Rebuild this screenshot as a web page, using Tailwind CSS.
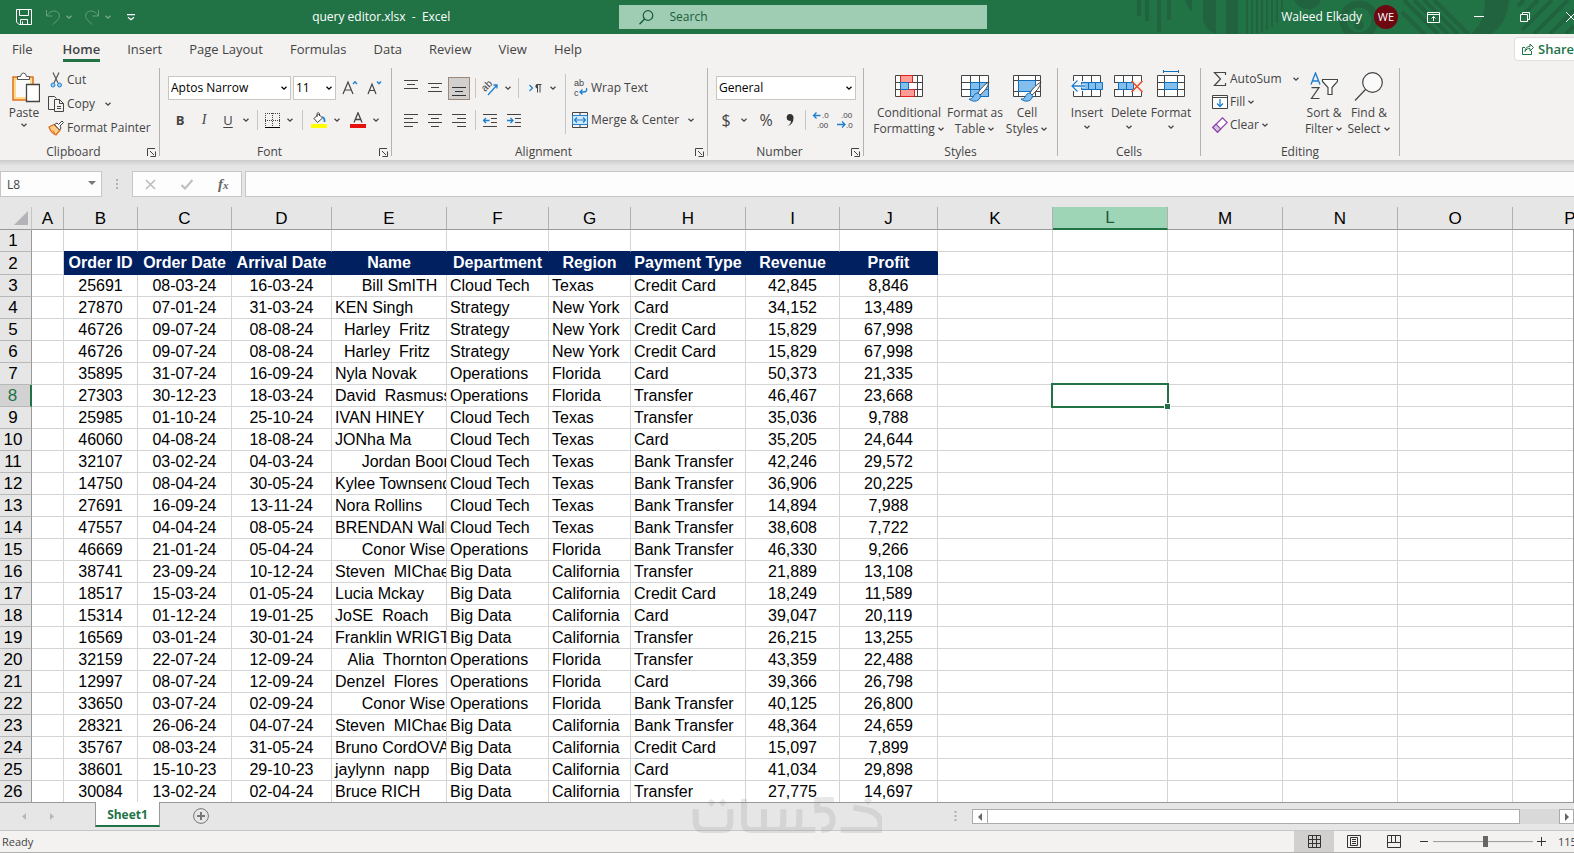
<!DOCTYPE html>
<html lang="en">
<head>
    <meta charset="UTF-8" />
    <meta name="viewport" content="width=device-width, initial-scale=1.0" />
    <title>query editor.xlsx - Excel</title>
    <script src="https://cdn.jsdelivr.net/npm/@tailwindcss/browser@4"></script>
</head>
<body class="h-screen flex flex-col overflow-hidden bg-[#e6e6e6] text-[#444444] text-[12px] leading-4 font-['Open_Sans','Noto_Sans',sans-serif]">

<!-- Shared symbols -->
<svg class="hidden">
    <symbol id="chev" viewBox="0 0 8 8"><path d="M1.5 2.8 4 5.2 6.5 2.8" fill="none" stroke="currentColor" stroke-width="1.3"/></symbol>
    <symbol id="launch" viewBox="0 0 9 9"><path d="M.5 8V.5H8M3 3l4 4M8.500 3.500v5H3.500" fill="none" stroke="currentColor"/></symbol>
    <symbol id="brush" viewBox="0 0 24 24">
        <path d="M22 2c-4 2-9 7-11 11l2 2c4-3 8-8 9-13z" fill="#fff" stroke="#444"/>
        <path d="M11 13c-3 0-4 2-5 4-1 2-2 2-4 2 3 3 9 3 11-1 .6-1.400.400-2.500 0-3z" fill="#83beec" stroke="#0f6fbf"/>
    </symbol>
</svg>

<!-- Title bar -->
<header class="relative h-[34px] shrink-0 flex items-center bg-[#217346] text-white">
    <svg class="absolute right-0 top-0 w-[524px] h-[34px]" viewBox="0 0 524 34" fill="#21633e" stroke="#21633e">
        <g stroke="none">
            <path d="M87 0h4v16h-4zM95 0h4v21h-4zM107 0h4v32h-4zM117 0h4v20h-4zM135 0h7v12q-5-5-7-12zM153 0h13v34q-13-5-13-17zM176 0h12v34h-12z"/>
            <path d="M196 0h2v34h-2zM201 0h2v34h-2zM206 0h2v33h-2zM211 0h2v32h-2zM216 0h2v30h-2zM221 0h2v27h-2zM226 0h2v23h-2zM231 0h2v16h-2z"/>
            <path d="M244 0h27q-3 9-13 9t-14-9zM435 0h24q-2 24-18 34h-20q14-12 14-34z"/>
            <circle cx="309" cy="25" r="5"/>
        </g>
        <circle cx="309" cy="20" r="16" fill="none" stroke-width="7"/>
        <path d="M354 0l34 34M364 0l34 34M374 0l34 34M384 0l34 34M352 12l22 22M468 6l6-6M472 16 488 0M472 30 502 0M484 34 518 0M500 34l24-24M516 34l8-8" stroke-width="4" fill="none"/>
    </svg>
    <div class="relative flex items-center flex-1 pl-4 mr-[15px]">
        <button aria-label="Save" class="mr-[13px]">
            <svg class="size-4" viewBox="0 0 16 16" fill="none" stroke="#fff"><path d="M.5.5h15v15H3l-2.500-2.500zM3.500.5v6h9v-6M4.500 15.500v-5h7v5M6.500 15.500v-3"/></svg>
        </button>
        <button aria-label="Undo" class="opacity-30"><svg class="size-4" viewBox="0 0 16 16" fill="none" stroke="#fff"><path d="M1.500 1v6h6M1.500 7C4 3 8 1 11.500 2.500S15 8 13 10.500L8 15.500"/></svg></button>
        <button aria-label="Undo list" class="opacity-40 mx-1"><svg class="size-2"><use href="#chev"/></svg></button>
        <button aria-label="Redo" class="opacity-30 ml-[7px]"><svg class="size-4" viewBox="0 0 16 16" fill="none" stroke="#fff"><path d="M14.500 1v6h-6M14.500 7C12 3 8 1 4.500 2.500S1 8 3 10.500L8 15.500"/></svg></button>
        <button aria-label="Redo list" class="opacity-40 mx-1"><svg class="size-2"><use href="#chev"/></svg></button>
        <button aria-label="Customize toolbar" class="ml-[11px]"><svg class="w-2 h-[7px]" viewBox="0 0 8 7" fill="none" stroke="#fff"><path d="M0 .5h8M1 3.200l3 2.500 3-2.500" stroke-width="1.300"/></svg></button>
        <span class="flex-1 text-center pl-6 whitespace-pre">query editor.xlsx  -  Excel</span>
    </div>
    <label class="relative flex items-center w-[368px] h-6 bg-[#9fcdb3] px-5 gap-4">
        <svg class="size-[15px] shrink-0" viewBox="0 0 15 15" fill="none" stroke="#185c37"><circle cx="9" cy="5.500" r="4.800" stroke-width="1.200"/><path d="M5.500 9 .5 14.300" stroke-width="1.400"/></svg>
        <input type="text" placeholder="Search" class="w-full bg-transparent outline-none placeholder:text-[#185c37]" />
    </label>
    <div class="relative flex items-center justify-end flex-1 -mr-5 pl-5">
        <span>Waleed Elkady</span>
        <span class="size-6 ml-3 mr-3 rounded-full bg-[#6e0811] flex items-center justify-center text-[11px]">WE</span>
        <button aria-label="Ribbon display options" class="w-[46px] flex justify-center"><svg class="w-[13px] h-[11px]" viewBox="0 0 13 11" fill="none" stroke="#fff"><path d="M.5.5h12v10H.5zM.5 2.500h12M6.500 9V4.500M4.500 6.500l2-2 2 2"/></svg></button>
        <button aria-label="Minimize" class="w-[46px] flex justify-center"><svg class="w-[10px] h-[10px]" viewBox="0 0 10 10" stroke="#fff"><path d="M0 4.500h10"/></svg></button>
        <button aria-label="Restore" class="w-[46px] flex justify-center"><svg class="w-[10px] h-[10px]" viewBox="0 0 10 10" fill="none" stroke="#fff"><path d="M.5 2.500h7v7h-7zM2.500 2V.5h7v7H8"/></svg></button>
        <button aria-label="Close" class="w-[46px] flex justify-center"><svg class="w-[10px] h-[10px]" viewBox="0 0 10 10" stroke="#fff"><path d="M0 0l10 10M10 0 0 10"/></svg></button>
    </div>
</header>

<!-- Tabs -->
<nav class="h-8 shrink-0 flex items-center justify-between bg-[#f3f2f1] text-[13px] pl-3 pb-[2px]">
    <div class="flex gap-[27px]">
        <a href="#" class="mr-[3px]">File</a>
        <a href="#" class="font-semibold relative">Home<span class="absolute inset-x-0 top-[18px] h-[3px] bg-[#217346]"></span></a>
        <a href="#">Insert</a>
        <a href="#">Page Layout</a>
        <a href="#">Formulas</a>
        <a href="#">Data</a>
        <a href="#">Review</a>
        <a href="#">View</a>
        <a href="#">Help</a>
    </div>
    <button class="flex items-center gap-1 h-6 pl-[7px] w-[60px] bg-white border border-r-0 border-[#e1dfdd] rounded-l-sm text-[#217346] font-semibold whitespace-nowrap">
        <svg class="size-3 shrink-0" viewBox="0 0 12 12" fill="none" stroke="#217346"><path d="M3 4.500H.5v7h9V8M3 8.500C3 5 5 3.500 8 3.500V1l3.500 3.500L8 8V5.500C6 5.500 4 6 3 8.500z"/></svg>
        Share
    </button>
</nav>

<!-- Ribbon -->
<section class="h-[94px] shrink-0 flex bg-[#f3f2f1] pt-[2px] whitespace-nowrap">

    <div class="w-40 shrink-0 flex flex-col border-r border-[#b5b3b1] mb-1">
        <div class="h-[76px] shrink-0 flex">
            <button class="w-12 flex flex-col items-center pt-1">
                <svg class="w-7 h-[31px] ml-1" viewBox="0 0 28 31" fill="none">
                    <path d="M1 5h20v23H1z" fill="#ffd98c" stroke="#e0701e" stroke-width="1.500"/><path d="M4 8h14v17H4z" fill="#fafafa"/>
                    <path d="M5.500 7.500V4.500h3Q9 1 11.500 1t3 3.500h3v3z" fill="#fff" stroke="#555"/>
                    <path d="M14.500 12.500h13v17h-13z" fill="#fff" stroke="#444" stroke-width="1.300"/>
                </svg>
                <span class="mt-[2px]">Paste</span>
                <svg class="size-2"><use href="#chev"/></svg>
            </button>
            <div class="flex flex-col items-start">
                <button class="h-6 flex items-center gap-[3px]">
                    <svg class="size-4" viewBox="0 0 16 16" fill="none" stroke="#555"><path d="M5 .5 10 11M11 .5 6 11" stroke-width="1.200"/><circle cx="5" cy="13" r="2" fill="#9cd0f5" stroke="#1e7fd0"/><circle cx="11.500" cy="13" r="2" fill="#9cd0f5" stroke="#1e7fd0"/></svg>Cut
                </button>
                <button class="h-6 flex items-center gap-[3px]">
                    <svg class="size-4" viewBox="0 0 16 16" fill="none" stroke="#444"><path d="M6 13.500H.5V.5h6l2 2M6.500 3.500h5l4 4v8h-9zM11.500 3.500v4h4M9 10.500h4M9 12.500h4"/></svg>Copy
                    <svg class="size-2 ml-[6px]"><use href="#chev"/></svg>
                </button>
                <button class="h-6 flex items-center gap-[3px]">
                    <svg class="size-4" viewBox="0 0 16 16"><path d="M1 7l5-2.500L12 10 8 15q-5-2-7-8z" fill="#ffcf8a" stroke="#e0701e" stroke-width="1.300"/><path d="M7.500 15 5 10.500" stroke="#e0701e"/><path d="M6.500 4.500 9 3l1.500 1.500L14 1l1.500 1.500L12 6l1 2-1.500 2z" fill="#fff" stroke="#444"/></svg>Format Painter
                </button>
            </div>
        </div>
        <div class="h-4 flex items-center"><span class="flex-1 text-center">Clipboard</span><button aria-label="Clipboard settings" class="w-3"><svg class="size-[9px]"><use href="#launch"/></svg></button></div>
    </div>

    <div class="w-[232px] shrink-0 flex flex-col border-r border-[#b5b3b1] mb-1">
        <div class="h-[76px] shrink-0 flex flex-col gap-2 pt-2 pl-2">
            <div class="flex items-center">
                <div class="relative text-black"><select aria-label="Font" class="appearance-none w-[123px] h-6 border border-[#c8c6c4] bg-white px-[2px]"><option>Aptos Narrow</option></select><svg class="absolute right-[3px] top-2 size-2"><use href="#chev"/></svg></div>
                <div class="relative text-black ml-[2px]"><select aria-label="Font size" class="appearance-none w-[43px] h-6 border border-[#c8c6c4] bg-white px-[2px]"><option>11</option></select><svg class="absolute right-[3px] top-2 size-2"><use href="#chev"/></svg></div>
                <button aria-label="Increase font size" class="w-6 flex justify-center ml-[2px]"><svg class="w-4 h-4" viewBox="0 0 16 16" fill="none"><path d="M1 14 6 2l5 12M2.500 10h7" stroke="#444" stroke-width="1.200"/><path d="M11 4l2-2.200L15 4" stroke="#1e7fd0" stroke-width="1.300"/></svg></button>
                <button aria-label="Decrease font size" class="w-6 flex justify-center"><svg class="w-4 h-4" viewBox="0 0 16 16" fill="none"><path d="M2 14 6 4l4 10M3.200 10.500h5.600" stroke="#444" stroke-width="1.200"/><path d="M11 1.500l2 2.200 2-2.200" stroke="#1e7fd0" stroke-width="1.300"/></svg></button>
            </div>
            <div class="flex items-center h-6">
                <button class="w-6 font-bold text-[13px]">B</button>
                <button class="w-6 italic text-[14px] font-['Liberation_Serif',serif]">I</button>
                <button class="w-6 underline underline-offset-2 text-[13px]">U</button>
                <button aria-label="Underline styles" class="w-3 flex justify-center"><svg class="size-2"><use href="#chev"/></svg></button>
                <span class="w-px h-5 bg-[#c8c6c4] ml-[5px] mr-[2px]"></span>
                <button aria-label="Borders" class="w-6 flex justify-center"><svg class="size-[15px]" viewBox="0 0 15 15" fill="none" stroke="#444"><path d="M.5 0v13M14.500 0v13M0 .5h15M7.500 0v13M0 7.500h15" stroke-dasharray="1 1"/><path d="M0 14.500h15" stroke="#000"/></svg></button>
                <button aria-label="Border styles" class="w-3 flex justify-center"><svg class="size-2"><use href="#chev"/></svg></button>
                <span class="w-px h-5 bg-[#c8c6c4] ml-1.5 mr-1"></span>
                <button aria-label="Fill color" class="w-6 flex justify-center"><svg class="size-4" viewBox="0 0 16 16" fill="none"><path d="M3 6.500 7.500 2l4 4-5 4.500z" fill="#fff" stroke="#444"/><path d="M6 5V1.500Q7.500-.5 8.500 1.500V4" stroke="#444"/><path d="M11 5q3 1 2.500 5" stroke="#1e7fd0" stroke-width="1.800"/><path d="M0 12h16v4H0z" fill="#ff0"/></svg></button>
                <button aria-label="Fill colors" class="w-3 flex justify-center"><svg class="size-2"><use href="#chev"/></svg></button>
                <button aria-label="Font color" class="w-6 flex justify-center ml-[3px]"><svg class="size-4" viewBox="0 0 16 16" fill="none"><path d="M4 10.500 8 .8l4 9.700M5.300 7.500h5.400" stroke="#444" stroke-width="1.300"/><path d="M0 12h16v4H0z" fill="#e8120c"/></svg></button>
                <button aria-label="Font colors" class="w-3 flex justify-center"><svg class="size-2"><use href="#chev"/></svg></button>
            </div>
        </div>
        <div class="h-4 flex items-center"><span class="flex-1 text-center">Font</span><button aria-label="Font settings" class="w-3"><svg class="size-[9px]"><use href="#launch"/></svg></button></div>
    </div>

    <div class="w-[316px] shrink-0 flex flex-col border-r border-[#b5b3b1] mb-1">
        <div class="h-[76px] shrink-0 flex">
            <div class="flex flex-col gap-2 pt-2 pl-[7px]">
                <div class="flex items-center h-6">
                    <button aria-label="Top align" class="w-6 flex justify-center"><svg class="w-[14px] h-4" viewBox="0 0 14 16" stroke="#444"><path d="M0 .5h14M3 4.500h8M0 8.500h14"/></svg></button>
                    <button aria-label="Middle align" class="w-6 flex justify-center"><svg class="w-[14px] h-4" viewBox="0 0 14 16" stroke="#444"><path d="M0 3.500h14M3 7.500h8M0 11.500h14"/></svg></button>
                    <button aria-label="Bottom align" class="w-[22px] mx-px h-[23px] flex justify-center items-center bg-[#d2d0ce] border border-[#9c8878]"><svg class="w-[14px] h-4" viewBox="0 0 14 16" stroke="#333"><path d="M0 7.500h14M3 11.500h8M0 15.500h14"/></svg></button>
                    <span class="w-px h-5 bg-[#c8c6c4] ml-1 mr-[2px]"></span>
                    <button aria-label="Orientation" class="w-6 flex justify-center"><svg class="size-4 overflow-visible" viewBox="0 0 16 16" fill="none"><text transform="translate(3 12) rotate(-45)" font-size="10" fill="#444" font-family="Liberation Sans">ab</text><path d="M6 15 15 5M11.500 5H15v3.500" stroke="#1e7fd0" stroke-width="1.300"/></svg></button>
                    <button aria-label="Orientation list" class="w-3 flex justify-center"><svg class="size-2"><use href="#chev"/></svg></button>
                    <span class="w-px h-5 bg-[#c8c6c4] ml-1 mr-1"></span>
                    <button aria-label="Text direction" class="w-6 flex justify-center"><svg class="w-[13px] h-3" viewBox="0 0 13 12" fill="none"><path d="M.5 3 3.500 6l-3 3" stroke="#1e7fd0" stroke-width="1.300"/><path d="M8.500 2.500v8M11 2.500v8M12.500 2.500H8" stroke="#444"/><path d="M8.500 2a2 2.200 0 000 4.500z" fill="#444"/></svg></button>
                    <button aria-label="Text direction list" class="w-3 flex justify-center"><svg class="size-2"><use href="#chev"/></svg></button>
                </div>
                <div class="flex items-center h-6">
                    <button aria-label="Align left" class="w-6 flex justify-center"><svg class="w-[14px] h-[13px]" viewBox="0 0 14 13" stroke="#444"><path d="M0 .5h14M0 4.500h9M0 8.500h14M0 12.500h9"/></svg></button>
                    <button aria-label="Center" class="w-6 flex justify-center"><svg class="w-[14px] h-[13px]" viewBox="0 0 14 13" stroke="#444"><path d="M0 .5h14M3 4.500h8M0 8.500h14M3 12.500h8"/></svg></button>
                    <button aria-label="Align right" class="w-6 flex justify-center"><svg class="w-[14px] h-[13px]" viewBox="0 0 14 13" stroke="#444"><path d="M0 .5h14M5 4.500h9M0 8.500h14M5 12.500h9"/></svg></button>
                    <span class="w-px h-5 bg-[#c8c6c4] ml-1 mr-[2px]"></span>
                    <button aria-label="Decrease indent" class="w-6 flex justify-center"><svg class="w-[14px] h-[13px]" viewBox="0 0 14 13" fill="none" stroke="#444"><path d="M0 .5h14M8 4.500h6M8 8.500h6M0 12.500h14"/><path d="M.5 6.500h6M3 4 .5 6.500 3 9" stroke="#1e7fd0" stroke-width="1.300"/></svg></button>
                    <button aria-label="Increase indent" class="w-6 flex justify-center"><svg class="w-[14px] h-[13px]" viewBox="0 0 14 13" fill="none" stroke="#444"><path d="M0 .5h14M8 4.500h6M8 8.500h6M0 12.500h14"/><path d="M0 6.500h6M3.500 4 6 6.500 3.500 9" stroke="#1e7fd0" stroke-width="1.300"/></svg></button>
                </div>
            </div>
            <span class="w-px h-[60px] bg-[#c8c6c4] mt-[6px] mx-1.5"></span>
            <div class="flex flex-col gap-2 pt-2">
                <button class="h-6 flex items-center gap-[3px]"><svg class="w-4 h-[18px] overflow-visible" viewBox="0 0 16 18" fill="none"><text x="2" y="7" font-size="9" fill="#444" font-family="Liberation Sans">ab</text><text x="2" y="17" font-size="9" fill="#444" font-family="Liberation Sans">c</text><path d="M14.500 9q1 4-3 4H8M10.500 10.500 8 13l2.500 2.500" stroke="#1e7fd0" stroke-width="1.300"/></svg>Wrap Text</button>
                <button class="h-6 flex items-center gap-[3px]"><svg class="size-4" viewBox="0 0 16 16" fill="none"><path d="M.5 4V.5h15V4M.5 12v3.500h15V12M8 .5V3M8 13v2.500" stroke="#444"/><path d="M.5 3.500h15v9H.5z" fill="#d6ebfa" stroke="#1e7fd0"/><path d="M2.500 8h11M5 5.500 2.500 8 5 10.500M11 5.500 13.500 8 11 10.500" stroke="#1e7fd0" stroke-width="1.200"/></svg>Merge &amp; Center<svg class="size-2 ml-[5px]"><use href="#chev"/></svg></button>
            </div>
        </div>
        <div class="h-4 flex items-center"><span class="flex-1 text-center">Alignment</span><button aria-label="Alignment settings" class="w-3"><svg class="size-[9px]"><use href="#launch"/></svg></button></div>
    </div>

    <div class="w-[156px] shrink-0 flex flex-col border-r border-[#b5b3b1] mb-1">
        <div class="h-[76px] shrink-0 flex flex-col gap-2 pt-2 pl-2">
            <div class="relative text-black"><select aria-label="Number format" class="appearance-none w-[140px] h-6 border border-[#c8c6c4] bg-white px-[2px]"><option>General</option></select><svg class="absolute left-[129px] top-2 size-2"><use href="#chev"/></svg></div>
            <div class="flex items-center h-6">
                <button class="w-5 text-[16px]">$</button>
                <button aria-label="Accounting formats" class="w-4 flex justify-center"><svg class="size-2"><use href="#chev"/></svg></button>
                <button class="w-7 text-[16px]">%</button>
                <button aria-label="Comma style" class="w-5 flex justify-center"><svg class="w-2 h-3" viewBox="0 0 8 12" fill="#333"><path d="M4 0a3.500 3.500 0 00-1 6.800Q5 7.200 5 6.500 5 10 1.500 12 7.500 10.500 7.500 4A3.500 3.500 0 004 0z"/></svg></button>
                <span class="w-px h-5 bg-[#c8c6c4] ml-[5px] mr-[3px]"></span>
                <button aria-label="Increase decimal" class="w-6 flex justify-center"><svg class="w-4 h-[18px] overflow-visible" viewBox="0 0 16 18" fill="none"><text x="9" y="7" font-size="8" fill="#444" font-family="Liberation Sans">.0</text><text x="4" y="17" font-size="8" fill="#444" font-family="Liberation Sans">.00</text><path d="M.5 4.500h7M3.500 1.500l-3 3 3 3" stroke="#1e7fd0" stroke-width="1.300"/></svg></button>
                <button aria-label="Decrease decimal" class="w-6 flex justify-center"><svg class="w-4 h-[18px] overflow-visible" viewBox="0 0 16 18" fill="none"><text x="4" y="7" font-size="8" fill="#444" font-family="Liberation Sans">.00</text><text x="9" y="17" font-size="8" fill="#444" font-family="Liberation Sans">.0</text><path d="M0 13.500h8M5 10.500l3 3-3 3" stroke="#1e7fd0" stroke-width="1.300"/></svg></button>
            </div>
        </div>
        <div class="h-4 flex items-center"><span class="flex-1 text-center">Number</span><button aria-label="Number settings" class="w-3"><svg class="size-[9px]"><use href="#launch"/></svg></button></div>
    </div>

    <div class="w-[194px] shrink-0 flex flex-col border-r border-[#b5b3b1] mb-1">
        <div class="h-[76px] shrink-0 flex pl-2">
            <button class="w-[74px] flex flex-col items-center pt-[7px]">
                <svg class="w-7 h-[22px] mb-2" viewBox="0 0 28 22" fill="none"><path d="M.5.5h27v21H.5z" fill="#fff" stroke="#444"/><path d="M.5 7.500h27M.5 14.500h27M5.500.5v21M22.500.5v21" stroke="#444"/><path d="M5.500.5h12v7h-12zM5.500 14.500h14v7h-14z" fill="#ff9d96" stroke="#e0201b"/><path d="M5.500 7.500h8v7h-8z" fill="#83beec" stroke="#0f6fbf"/></svg>
                <span>Conditional</span><span class="flex items-center gap-[2px]">Formatting <svg class="size-2"><use href="#chev"/></svg></span>
            </button>
            <button class="w-[58px] flex flex-col items-center pt-[7px]">
                <svg class="w-[30px] h-7 mb-[2px] ml-[2px]" viewBox="0 0 30 28" fill="none"><path d="M.5.5h27v21H.5z" fill="#fff" stroke="#444"/><path d="M9.500 7.500h18v14h-18z" fill="#83beec"/><path d="M.5 7.500h27M.5 14.500h9M9.500.5v21M18.500.5v7" stroke="#444"/><path d="M9.500 7.500h18v14h-18zM9.500 14.500h18M18.500 7.500v14" stroke="#0f6fbf"/><use href="#brush" x="6" y="5" width="24" height="24"/></svg>
                <span>Format as</span><span class="flex items-center gap-[2px]">Table <svg class="size-2"><use href="#chev"/></svg></span>
            </button>
            <button class="w-[46px] flex flex-col items-center pt-[7px]">
                <svg class="w-[30px] h-7 mb-[2px] ml-[2px]" viewBox="0 0 30 28" fill="none"><path d="M.5.5h27v21H.5z" fill="#fff" stroke="#444"/><path d="M.5 5.500h27M.5 16.500h27M5.500.5v21M22.500.5v21" stroke="#444"/><path d="M5.500 5.500h17v11h-17z" fill="#83beec" stroke="#0f6fbf"/><use href="#brush" x="6" y="5" width="24" height="24"/></svg>
                <span>Cell</span><span class="flex items-center gap-[2px]">Styles <svg class="size-2"><use href="#chev"/></svg></span>
            </button>
        </div>
        <div class="h-4 text-center">Styles</div>
    </div>

    <div class="w-[143px] shrink-0 flex flex-col border-r border-[#b5b3b1] mb-1">
        <div class="h-[76px] shrink-0 flex pl-2">
            <button class="w-[42px] flex flex-col items-center pt-[2px]">
                <svg class="w-8 h-[27px] mb-2" viewBox="0 0 32 27" fill="none"><path d="M2.500 5.500h27v21h-27z" fill="#fff" stroke="#444"/><path d="M11.500 5.500v21M20.500 5.500v21" stroke="#444"/><path d="M0 11h14v10H0z" fill="#f3f2f1"/><path d="M10.500 12.500h21v7h-21zM17.500 12.500v7M24.500 12.500v7" fill="#83beec" stroke="#0f6fbf"/><path d="M1 16h13M6.500 10.500 1 16l5.500 5.500" stroke="#fff" stroke-width="3"/><path d="M1 16h13M6.500 10.500 1 16l5.500 5.500" stroke="#1e7fd0" stroke-width="1.300"/></svg>
                <span>Insert</span><svg class="size-2 mt-[2px]"><use href="#chev"/></svg>
            </button>
            <button class="w-[42px] flex flex-col items-center pt-[2px]">
                <svg class="w-[30px] h-[27px] mb-2" viewBox="0 0 30 27" fill="none"><path d="M.5 5.500h27v21H.5z" fill="#fff" stroke="#444"/><path d="M.5 12.500h27M.5 19.500h27M9.500 5.500v21M18.500 5.500v21" stroke="#444"/><path d="M0 13h4v6H0zM20 11h9v11h-9z" fill="#f3f2f1"/><path d="M4.500 12.500h15v7h-15zM12.500 12.500v7" fill="#83beec" stroke="#0f6fbf"/><path d="M17.500 11l11 11M28.500 11l-11 11" stroke="#e8502a" stroke-width="1.600"/></svg>
                <span>Delete</span><svg class="size-2 mt-[2px]"><use href="#chev"/></svg>
            </button>
            <button class="w-[42px] flex flex-col items-center pt-[2px]">
                <svg class="w-7 h-[27px] mb-2" viewBox="0 0 28 27" fill="none"><path d="M6.500 0v3M21.500 0v3M6.500 1.500h15" stroke="#0f6fbf"/><path d="M.5 5.500h27v21H.5z" fill="#fff" stroke="#444"/><path d="M.5 12.500h27M.5 19.500h27M7.500 5.500v21M20.500 5.500v21" stroke="#444"/><path d="M7.500 12.500h13v7h-13z" fill="#83beec" stroke="#0f6fbf"/></svg>
                <span>Format</span><svg class="size-2 mt-[2px]"><use href="#chev"/></svg>
            </button>
        </div>
        <div class="h-4 text-center">Cells</div>
    </div>

    <div class="w-[199px] shrink-0 flex flex-col border-r border-[#b5b3b1] mb-1">
        <div class="h-[76px] shrink-0 flex pl-[11px]">
            <div class="w-[88px] flex flex-col items-start">
                <button class="h-[22px] flex items-center gap-[2px]"><svg class="size-4" viewBox="0 0 16 16" fill="none" stroke="#444"><path d="M13.500 4V1.500h-11L8.500 8l-6 6.500h11V12" stroke-width="1.200"/></svg>AutoSum<svg class="size-2 ml-2"><use href="#chev"/></svg></button>
                <button class="h-6 flex items-center gap-[2px]"><svg class="size-4" viewBox="0 0 16 16" fill="none" stroke="#444"><path d="M.5 1.500h15v13H.5zM.5 3.500h15" fill="#fff"/><path d="M8 5v7.500M5 9.500l3 3 3-3" stroke="#1e7fd0" stroke-width="1.300"/></svg>Fill<svg class="size-2"><use href="#chev"/></svg></button>
                <button class="h-[22px] flex items-center gap-[2px]"><svg class="size-4" viewBox="0 0 16 16"><path d="M.8 10.500 10.500.8l4.700 4.700-9.700 9.700z" fill="#fff" stroke="#8e44ad" stroke-width="1.200"/><path d="M.8 10.500 4 7.200l4.700 4.700-3.200 3.300z" fill="#d2c4da" stroke="#8e44ad" stroke-width="1.200"/></svg>Clear<svg class="size-2"><use href="#chev"/></svg></button>
            </div>
            <button class="w-12 flex flex-col items-center pt-1">
                <svg class="w-7 h-7 mb-[5px]" viewBox="0 0 28 28" fill="none"><path d="M1 12.500 5.500 1 10 12.500M2.500 9h6" stroke="#1e7fd0" stroke-width="1.400"/><path d="M1.500 15.600H9L1.500 26.500H9.500" stroke="#444" stroke-width="1.200"/><path d="M12.500 7.500h15v2L22 15.500v7h-4v-7l-5.500-6z" fill="#fff" stroke="#444" stroke-width="1.200"/></svg>
                <span>Sort &amp;</span><span class="flex items-center gap-[2px]">Filter <svg class="size-2"><use href="#chev"/></svg></span>
            </button>
            <button class="w-[42px] flex flex-col items-center pt-1">
                <svg class="w-[30px] h-[30px] mb-[3px]" viewBox="0 0 30 30" fill="none" stroke="#444" stroke-width="1.200"><circle cx="18.500" cy="10.500" r="9.800" fill="#fafafa"/><path d="M11.500 17.500 1 28.500"/></svg>
                <span>Find &amp;</span><span class="flex items-center gap-[2px]">Select <svg class="size-2"><use href="#chev"/></svg></span>
            </button>
        </div>
        <div class="h-4 text-center">Editing</div>
    </div>
</section>
<div class="h-[6px] shrink-0 bg-linear-to-b from-[#cccccc] to-[#e6e6e6]"></div>

<!-- Formula bar -->
<div class="h-[41px] shrink-0 flex items-start pt-[5px]">
    <div class="relative">
        <input type="text" aria-label="Name box" value="L8" class="w-[102px] h-[26px] bg-[#fdfdfd] border border-[#c6c6c6] pl-[6px] block" />
        <svg class="absolute right-[6px] top-[10px] w-2 h-1" viewBox="0 0 8 4" fill="#777"><path d="M0 0h8L4 4z"/></svg>
    </div>
    <svg class="w-[4px] h-[26px] mx-[13px]" viewBox="0 0 4 26" fill="#b0b0b0"><path d="M1 8h2v2h-2zM1 12h2v2h-2zM1 16h2v2h-2z"/></svg>
    <div class="w-[110px] h-[26px] bg-[#fdfdfd] border border-[#c6c6c6] flex items-center justify-around">
        <button aria-label="Cancel"><svg class="size-[11px]" viewBox="0 0 11 11" stroke="#bdbdbd" stroke-width="1.600"><path d="M1 1l9 9M10 1l-9 9"/></svg></button>
        <button aria-label="Enter"><svg class="w-3 h-[11px]" viewBox="0 0 12 11" fill="none" stroke="#bdbdbd" stroke-width="2"><path d="M.5 6 4 9.500 11.500 1"/></svg></button>
        <button aria-label="Insert function" class="font-['Liberation_Serif',serif] italic font-bold text-[15px] text-[#666666]">f<span class="text-[11px]">x</span></button>
    </div>
    <input type="text" aria-label="Formula" class="flex-1 ml-[3px] h-[26px] bg-[#fdfdfd] border border-r-0 border-[#c6c6c6]" />
</div>

<!-- Sheet -->
<main class="relative flex-1 min-h-0 overflow-hidden">
    <table class="table-fixed border-separate border-spacing-0 w-[1628px] bg-white text-black text-[16px] leading-5 font-['Liberation_Sans',Arial,sans-serif]">
        <colgroup>
            <col class="w-[32px]" /><col class="w-[32px]" /><col class="w-[74px]" /><col class="w-[94px]" /><col class="w-[100px]" />
            <col class="w-[115px]" /><col class="w-[102px]" /><col class="w-[82px]" /><col class="w-[115px]" /><col class="w-[94px]" /><col class="w-[98px]" />
            <col class="w-[115px]" /><col class="w-[115px]" /><col class="w-[115px]" /><col class="w-[115px]" /><col class="w-[115px]" /><col class="w-[115px]" />
        </colgroup>
        <thead>
            <tr id="columns" class="h-[23px]">
                <th class="p-0 bg-[#e6e6e6] border-b border-r border-b-[#999999] border-r-[#c4c4c4]"><svg class="size-[14px] ml-[14px]" viewBox="0 0 14 14" fill="#b4b4b8"><path d="M14 0v14H0z"/></svg></th>
            </tr>
        </thead>
        <tbody id="rows"></tbody>
    </table>
    <div class="absolute right-0 top-[23px] bottom-0 w-px bg-[#999999]"></div>
</main>

<!-- Sheet tabs and scroll bar -->
<footer class="relative shrink-0">
    <div class="h-7 flex items-start border-t border-[#999999]">
        <div class="w-[95px] flex items-center h-[27px] pl-[22px] gap-6">
            <button aria-label="Previous sheet"><svg class="w-1 h-[7px]" viewBox="0 0 4 7" fill="#b8b8b8"><path d="M4 0v7L0 3.500z"/></svg></button>
            <button aria-label="Next sheet"><svg class="w-1 h-[7px]" viewBox="0 0 4 7" fill="#b8b8b8"><path d="M0 0v7l4-3.500z"/></svg></button>
        </div>
        <button class="w-[65px] h-[25px] pt-[3px] -mt-px bg-white border-x border-[#999999] border-b-2 border-b-[#217346] text-[#217346] font-bold">Sheet1</button>
        <button aria-label="New sheet" class="ml-[33px] mt-[5px]"><svg class="size-4" viewBox="0 0 16 16" fill="none" stroke="#777"><circle cx="8" cy="8" r="7.400"/><path d="M8 4v8M4 8h8" stroke-width="2"/></svg></button>
        <div class="ml-auto w-[620px] flex items-center h-[15px] mt-[6px]">
            <svg class="w-[3px] h-[11px] mr-[15px]" viewBox="0 0 3 11" fill="#b0b0b0"><path d="M.5 0h2v2h-2zM.5 4h2v2h-2zM.5 8h2v2h-2z"/></svg>
            <button aria-label="Scroll left" class="w-4 h-[15px] bg-white border border-[#ababab] flex items-center justify-center"><svg class="w-1 h-2" viewBox="0 0 4 8" fill="#666"><path d="M4 0v8L0 4z"/></svg></button>
            <div class="flex-1 h-[15px] bg-[#d9d9d9] pr-[39px]"><div class="h-[15px] bg-white border border-l-0 border-[#ababab]"></div></div>
            <button aria-label="Scroll right" class="w-[15px] h-[15px] bg-white border border-[#ababab] flex items-center justify-center"><svg class="w-1 h-2" viewBox="0 0 4 8" fill="#666"><path d="M0 0v8l4-4z"/></svg></button>
        </div>
    </div>
    <div class="h-[23px] flex items-center bg-[#f3f2f1] border-y border-t-[#c6c6c6] border-b-[#b0b0b0] text-[11px] whitespace-nowrap overflow-hidden">
        <span class="pl-[2px] flex-1">Ready</span>
        <button aria-label="Normal" class="w-10 h-full bg-[#d2d0ce] flex items-center justify-center"><svg class="size-[13px]" viewBox="0 0 13 13" fill="none" stroke="#333"><path d="M.5.5h12v12H.5zM.5 4.500h12M.5 8.500h12M4.500.5v12M8.500.5v12"/></svg></button>
        <button aria-label="Page layout" class="w-10 flex justify-center"><svg class="w-[14px] h-[13px]" viewBox="0 0 14 13" fill="none" stroke="#333"><path d="M.5.5h13v12H.5zM3.500 2.500h7v8h-7zM5 4.500h4M5 6.500h4M5 8.500h4"/></svg></button>
        <button aria-label="Page break preview" class="w-10 flex justify-center"><svg class="w-[14px] h-[13px]" viewBox="0 0 14 13" fill="none" stroke="#333"><path d="M.5.5h13v12H.5zM4.500.5v7M8.500.5v7M.5 7.500h8M8.500 7.500h5"/></svg></button>
        <button aria-label="Zoom out" class="ml-[6px] mr-[5px]"><svg class="w-2 h-2" viewBox="0 0 8 8" stroke="#333"><path d="M0 3.500h8"/></svg></button>
        <input type="range" aria-label="Zoom" min="10" max="190" value="105" class="appearance-none w-[100px] h-[11px] bg-linear-to-b from-transparent from-45% via-[#a0a0a0] via-50% to-transparent to-60% [&::-webkit-slider-thumb]:appearance-none [&::-webkit-slider-thumb]:w-[5px] [&::-webkit-slider-thumb]:h-[11px] [&::-webkit-slider-thumb]:bg-[#666666]" />
        <button aria-label="Zoom in" class="ml-1 mr-3"><svg class="w-[9px] h-[9px]" viewBox="0 0 9 9" stroke="#333"><path d="M0 4.500h9M4.500 0v9"/></svg></button>
        <span class="w-4 overflow-hidden">115%</span>
    </div>
    <svg class="absolute left-[690px] -top-[6px] w-[192px] h-10" viewBox="0 0 576 120" fill="none" stroke="#8a8a8a" stroke-opacity=".2" stroke-width="18">
        <path d="M17 40v32q0 30 24 30h60q20 0 20-24V40M162 8v72q0 22 22 22h192M222 40v62M280 40v40q0 22-18 22M328 40v40q0 22-18 22M432 12h-50v30q46-8 46 30 0 30-34 30M452 102h120V84q0-28-34-40l-48-10"/>
        <path d="M64 8l12 12-12 12-12-12zM98 8l12 12-12 12-12-12zM534 2l12 12-12 12-12-12z" stroke="none" fill="#8a8a8a" fill-opacity=".2"/>
    </svg>
</footer>

<script>
    const columns = ["A", "B", "C", "D", "E", "F", "G", "H", "I", "J", "K", "L", "M", "N", "O", "P"];
    const titles = ["Order ID", "Order Date", "Arrival Date", "Name", "Department", "Region", "Payment Type", "Revenue", "Profit"];

    const orders = [
        ["25691", "08-03-24", "16-03-24", "      Bill SmITH", "Cloud Tech", "Texas", "Credit Card", "42,845", "8,846"],
        ["27870", "07-01-24", "31-03-24", "KEN Singh", "Strategy", "New York", "Card", "34,152", "13,489"],
        ["46726", "09-07-24", "08-08-24", "  Harley  Fritz", "Strategy", "New York", "Credit Card", "15,829", "67,998"],
        ["46726", "09-07-24", "08-08-24", "  Harley  Fritz", "Strategy", "New York", "Credit Card", "15,829", "67,998"],
        ["35895", "31-07-24", "16-09-24", "Nyla Novak", "Operations", "Florida", "Card", "50,373", "21,335"],
        ["27303", "30-12-23", "18-03-24", "David  Rasmussen", "Operations", "Florida", "Transfer", "46,467", "23,668"],
        ["25985", "01-10-24", "25-10-24", "IVAN HINEY", "Cloud Tech", "Texas", "Transfer", "35,036", "9,788"],
        ["46060", "04-08-24", "18-08-24", "JONha Ma", "Cloud Tech", "Texas", "Card", "35,205", "24,644"],
        ["32107", "03-02-24", "04-03-24", "      Jordan Boone", "Cloud Tech", "Texas", "Bank Transfer", "42,246", "29,572"],
        ["14750", "08-04-24", "30-05-24", "Kylee Townsend", "Cloud Tech", "Texas", "Bank Transfer", "36,906", "20,225"],
        ["27691", "16-09-24", "13-11-24", "Nora Rollins", "Cloud Tech", "Texas", "Bank Transfer", "14,894", "7,988"],
        ["47557", "04-04-24", "08-05-24", "BRENDAN Wallace", "Cloud Tech", "Texas", "Bank Transfer", "38,608", "7,722"],
        ["46669", "21-01-24", "05-04-24", "      Conor Wise", "Operations", "Florida", "Bank Transfer", "46,330", "9,266"],
        ["38741", "23-09-24", "10-12-24", "Steven  MIChael", "Big Data", "California", "Transfer", "21,889", "13,108"],
        ["18517", "15-03-24", "01-05-24", "Lucia Mckay", "Big Data", "California", "Credit Card", "18,249", "11,589"],
        ["15314", "01-12-24", "19-01-25", "JoSE  Roach", "Big Data", "California", "Card", "39,047", "20,119"],
        ["16569", "03-01-24", "30-01-24", "Franklin WRIGTH", "Big Data", "California", "Transfer", "26,215", "13,255"],
        ["32159", "22-07-24", "12-09-24", "   Alia  Thornton", "Operations", "Florida", "Transfer", "43,359", "22,488"],
        ["12997", "08-07-24", "12-09-24", "Denzel  Flores", "Operations", "Florida", "Card", "39,366", "26,798"],
        ["33650", "03-07-24", "02-09-24", "      Conor Wise", "Operations", "Florida", "Bank Transfer", "40,125", "26,800"],
        ["28321", "26-06-24", "04-07-24", "Steven  MIChael", "Big Data", "California", "Bank Transfer", "48,364", "24,659"],
        ["35767", "08-03-24", "31-05-24", "Bruno CordOVA", "Big Data", "California", "Credit Card", "15,097", "7,899"],
        ["38601", "15-10-23", "29-10-23", "jaylynn  napp", "Big Data", "California", "Card", "41,034", "29,898"],
        ["30084", "13-02-24", "02-04-24", "Bruce RICH", "Big Data", "California", "Transfer", "27,775", "14,697"]
    ];

    // Column letters
    document.getElementById("columns").insertAdjacentHTML("beforeend", columns.map(letter => {
        if (letter === "L") {
            return `<th class="p-0 font-normal text-[17px] bg-[#9fd5b7] text-[#1c5c38] border-b-2 border-r border-b-[#217346] border-r-[#b0b0b0]">L</th>`;
        }
        return `<th class="p-0 pt-px font-normal text-[17px] bg-[#e6e6e6] border-b border-r border-b-[#999999] border-r-[#b0b0b0]">${letter}</th>`;
    }).join(""));

    function rowHeader(n) {
        if (n === 8) {
            return `<th class="p-0 pt-px pr-[5px] font-normal text-[17px] bg-[#d2d2d2] text-[#217346] border-b border-b-[#b8b8b8] border-r-2 border-r-[#217346]">8</th>`;
        }
        return `<th class="p-0 pt-px pr-[5px] font-normal text-[17px] bg-[#e6e6e6] border-b border-r border-b-[#b8b8b8] border-r-[#999999]">${n}</th>`;
    }

    function cell(n, i) {
        const inTable = i >= 1 && i <= 9;
        if (n === 1 && inTable) {
            return `<td class="p-0 border-b border-r border-b-[#002060] border-r-[#d4d4d4]"></td>`;
        }
        if (n === 2 && inTable) {
            return `<td class="p-0 border-b border-r border-[#002060] bg-[#002060] text-white font-bold text-center whitespace-nowrap">${titles[i - 1]}</td>`;
        }
        if (n === 8 && columns[i] === "L") {
            return `<td class="p-0 relative border-b border-r border-[#d4d4d4]"><div class="absolute -inset-[2px] border-2 border-[#217346]"></div><div class="absolute -right-[4px] -bottom-[4px] size-[7px] border border-white bg-[#217346]"></div></td>`;
        }
        if (n > 2 && inTable) {
            const value = orders[n - 3][i - 1];
            const isText = i >= 4 && i <= 7;
            return isText
                ? `<td class="p-0 pt-px pl-[3px] border-b border-r border-[#d4d4d4] whitespace-pre overflow-hidden">${value}</td>`
                : `<td class="p-0 pt-px border-b border-r border-[#d4d4d4] text-center">${value}</td>`;
        }
        return `<td class="p-0 border-b border-r border-[#d4d4d4]"></td>`;
    }

    const rows = document.getElementById("rows");
    for (let n = 1; n <= orders.length + 2; n++) {
        const height = n === 2 ? "h-[23px]" : "h-[22px]";
        rows.insertAdjacentHTML("beforeend", `<tr class="${height}">${rowHeader(n)}${columns.map((c, i) => cell(n, i)).join("")}</tr>`);
    }
</script>

</body>
</html>
